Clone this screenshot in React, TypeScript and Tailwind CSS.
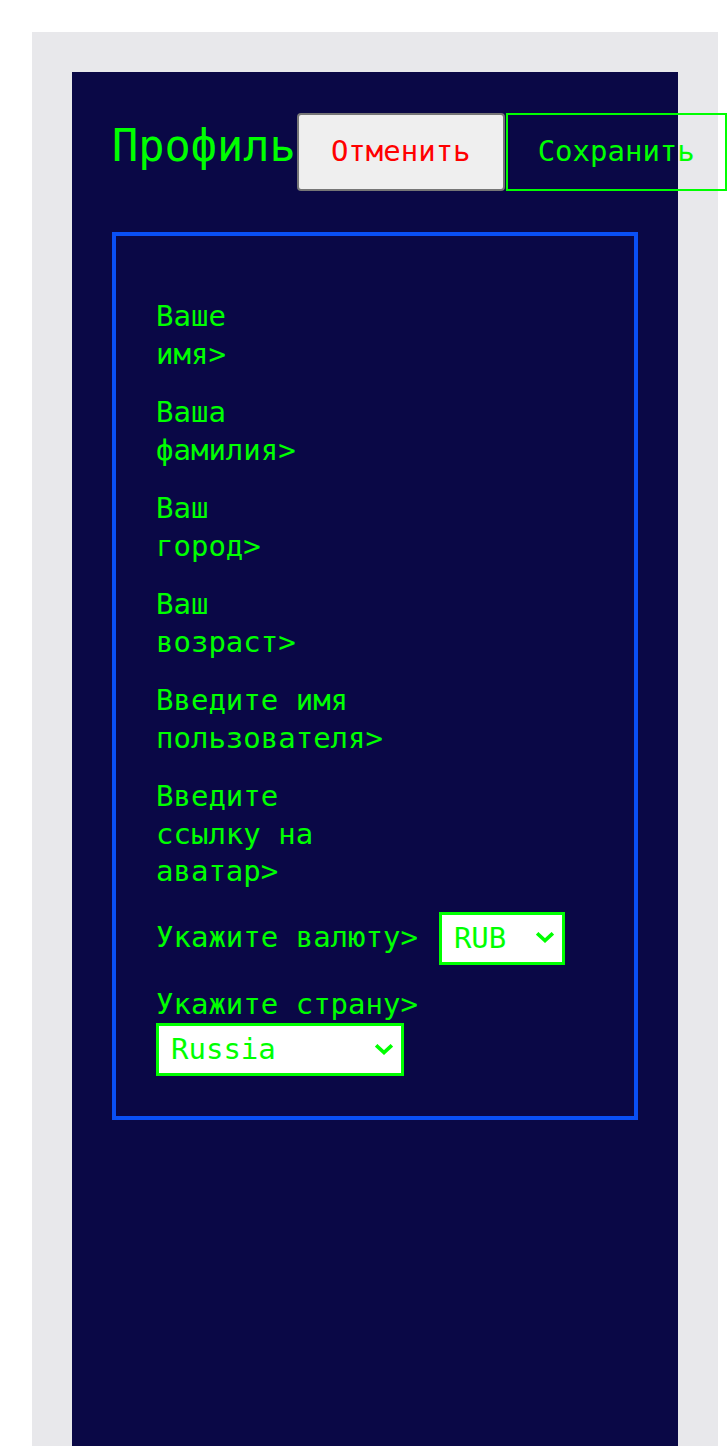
const mono = { fontFamily: '"DejaVu Sans Mono", "Liberation Mono", monospace' }

function Chevron() {
  return (
    <svg width="18" height="12" viewBox="0 0 18 12" className="shrink-0">
      <path d="M2.5 2.5 L9 8.5 L15.5 2.5" fill="none" stroke="#00ff00" strokeWidth="3.6" strokeLinecap="square" />
    </svg>
  )
}

function Select({ value, width }: { value: string; width: string }) {
  return (
    <div
      className={`${width} h-[53px] shrink-0 flex items-center justify-between bg-white border-[3px] border-[#00ff00] pl-[12px] pr-[8px] text-[29px] leading-none text-[#00ff00]`}
    >
      <span>{value}</span>
      <Chevron />
    </div>
  )
}

function Field({ lines }: { lines: string[] }) {
  return (
    <div>
      {lines.map((l) => (
        <div key={l} className="whitespace-pre">
          {l}
        </div>
      ))}
    </div>
  )
}

export default function App() {
  return (
    <div className="ml-8 mt-8 w-[686px] bg-[#e8e8eb] px-10 pt-10 pb-10" style={mono}>
      <div className="bg-[#0a0846] min-h-[1400px] p-10">
        <div className="flex items-start h-[79px] mb-[41px]">
          <h2 className="shrink-0 mt-[9px] text-[43.6px] leading-[50px] text-[#00ff00]">Профиль</h2>
          <button className="shrink-0 ml-[1px] mt-px w-[208px] h-[78px] flex items-center justify-center bg-[#efefef] border-2 border-[#767676] rounded-[4px] text-[29px] text-[#ff0000]">
            Отменить
          </button>
          <button className="shrink-0 ml-px mt-px w-[221px] h-[78px] flex items-center justify-center bg-transparent border-2 border-[#00ff00] text-[29px] text-[#00ff00]">
            Сохранить
          </button>
        </div>

        <div className="border-4 border-[#0a50f5] pt-[62px] pb-10 px-10 flex flex-col gap-[21px] text-[29px] leading-[37.5px] text-[#00ff00]">
          <Field lines={['Ваше', 'имя>']} />
          <Field lines={['Ваша', 'фамилия>']} />
          <Field lines={['Ваш', 'город>']} />
          <Field lines={['Ваш', 'возраст>']} />
          <Field lines={['Введите имя', 'пользователя>']} />
          <Field lines={['Введите', 'ссылку на', 'аватар>']} />
          <div className="flex items-center">
            <span className="shrink-0">Укажите валюту&gt;</span>
            <div className="ml-[21px] shrink-0">
              <Select value="RUB" width="w-[126px]" />
            </div>
          </div>
          <div>
            <div>Укажите страну&gt;</div>
            <Select value="Russia" width="w-[248px]" />
          </div>
        </div>
      </div>
    </div>
  )
}
